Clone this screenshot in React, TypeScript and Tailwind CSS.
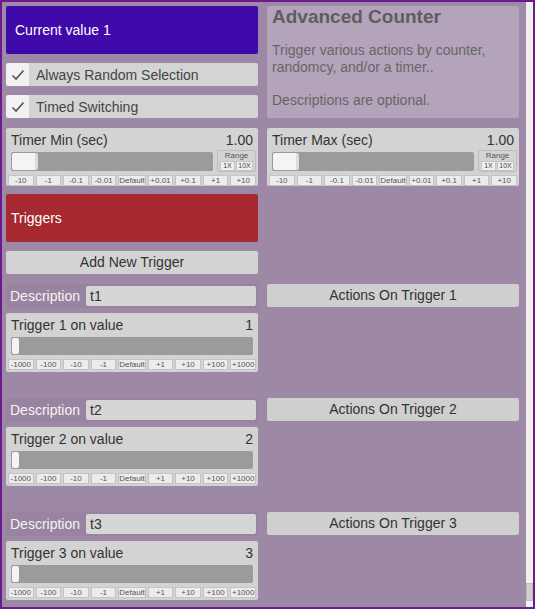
import React from 'react'

const timerSteps = ['-10', '-1', '-0.1', '-0.01', 'Default', '+0.01', '+0.1', '+1', '+10']
const triggerSteps = ['-1000', '-100', '-10', '-1', 'Default', '+1', '+10', '+100', '+1000']

function StepRow({ steps }: { steps: string[] }) {
  return (
    <div className="flex gap-[2px] px-[2px] h-[11px]">
      {steps.map((s) => (
        <div
          key={s}
          className="flex-1 flex items-center justify-center bg-[#ececec] border border-[#c4c4c4] text-[8px] leading-none text-[#555]"
        >
          {s}
        </div>
      ))}
    </div>
  )
}

function CheckRow({ label }: { label: string }) {
  return (
    <div className="flex h-[23px]">
      <div className="w-[23px] bg-[#f2f2f2] rounded-l-[2px] flex items-center justify-center">
        <svg width="14" height="12" viewBox="0 0 14 12" fill="none">
          <path d="M1.5 6.5 L5 10 L12.5 1.5" stroke="#555" strokeWidth="1.6" />
        </svg>
      </div>
      <div className="flex-1 bg-[#d4d4d4] rounded-r-[2px] flex items-center pl-[7px] pt-[1px] text-[14px] text-[#444]">
        {label}
      </div>
    </div>
  )
}

function TimerPanel({ title }: { title: string }) {
  return (
    <div className="h-[58px] bg-[#d3d3d3] rounded-[2px] flex flex-col">
      <div className="flex justify-between items-center px-[5px] h-[22px] pt-[2px] text-[14px] text-[#333]">
        <span>{title}</span>
        <span>1.00</span>
      </div>
      <div className="flex items-center gap-[4px] pl-[5px] pr-[2px] h-[24px]">
        <div className="flex-1 h-[19px] bg-[#9b9b9b] rounded-[2px] p-[1px]">
          <div className="w-[26px] h-full bg-[#f4f4f4] rounded-[2px] border-r-[3px] border-[#dcdcdc]" />
        </div>
        <div className="w-[39px] h-[22px] border border-[#bdbdbd] rounded-[2px] flex flex-col items-center">
          <span className="text-[8px] leading-[10px] text-[#555]">Range</span>
          <div className="flex gap-[1px]">
            <div className="w-[15px] h-[10px] bg-[#f0f0f0] border border-[#c4c4c4] text-[7px] leading-[8px] text-center text-[#444]">1X</div>
            <div className="w-[17px] h-[10px] bg-[#f0f0f0] border border-[#c4c4c4] text-[7px] leading-[8px] text-center text-[#444]">10X</div>
          </div>
        </div>
      </div>
      <div className="mt-[3px]">
        <StepRow steps={timerSteps} />
      </div>
    </div>
  )
}

function TriggerBlock({ n, last }: { n: number; last?: boolean }) {
  return (
    <div className={`flex gap-[9px] ${last ? '' : 'mb-[26px]'}`}>
      <div className="w-[252px] flex flex-col gap-[5px]">
        <div className="h-[24px] bg-[#9883a1] flex items-center pr-[2px]">
          <span className="w-[80px] pl-[4px] text-[14px] text-[#f4f4f4]">Description</span>
          <div className="flex-1 h-[20px] bg-[#d6d6d6] rounded-[2px] flex items-center pl-[4px] text-[14px] text-[#333]">
            t{n}
          </div>
        </div>
        <div className="h-[59px] bg-[#d3d3d3] rounded-[2px] flex flex-col">
          <div className="flex justify-between items-center px-[5px] h-[24px] text-[14px] text-[#333]">
            <span>Trigger {n} on value</span>
            <span>{n}</span>
          </div>
          <div className="px-[5px]">
            <div className="h-[18px] bg-[#9b9b9b] rounded-[2px] p-[1px]">
              <div className="w-[7px] h-full bg-[#f4f4f4] rounded-[2px]" />
            </div>
          </div>
          <div className="mt-[4px]">
            <StepRow steps={triggerSteps} />
          </div>
        </div>
      </div>
      <div className="w-[252px]">
        <div className="h-[23px] bg-[#cfcfcf] rounded-[2px] flex items-center justify-center text-[14px] text-[#333]">
          Actions On Trigger {n}
        </div>
      </div>
    </div>
  )
}

export default function App() {
  return (
    <div
      className="w-[535px] h-[609px] border-2 border-[#6c1b8e] bg-[#9d88a6] flex overflow-hidden"
      style={{ fontFamily: '"Liberation Sans", Arial, sans-serif' }}
    >
      <div className="flex-1 overflow-hidden pt-[4px] pl-[4px] pr-[7px]">
        {/* Header row */}
        <div className="flex gap-[9px] h-[112px]">
          <div className="w-[252px] flex flex-col gap-[9px]">
            <div className="h-[48px] bg-[#4009a9] rounded-[2px] flex items-center pl-[9px] text-[14px] text-white">
              Current value 1
            </div>
            <CheckRow label="Always Random Selection" />
            <CheckRow label="Timed Switching" />
          </div>
          <div className="w-[252px] bg-[#b3a3bb] rounded-[2px] px-[5px] pt-[1px] text-[#5e5e5e]">
            <div className="text-[19px] font-bold leading-[20px]">Advanced Counter</div>
            <div className="mt-[15px] text-[14px] leading-[16.5px] text-[#666]">
              Trigger various actions by counter,
              <br />
              randomcy, and/or a timer..
              <br />
              <br />
              Descriptions are optional.
            </div>
          </div>
        </div>

        {/* Timers */}
        <div className="flex gap-[9px] mt-[10px]">
          <div className="w-[252px]">
            <TimerPanel title="Timer Min (sec)" />
          </div>
          <div className="w-[252px]">
            <TimerPanel title="Timer Max (sec)" />
          </div>
        </div>

        {/* Triggers header */}
        <div className="w-[252px] mt-[8px] h-[48px] bg-[#a5292f] rounded-[2px] flex items-center pl-[5px] text-[14px] text-white">
          Triggers
        </div>
        <div className="w-[252px] mt-[9px] h-[23px] bg-[#d3d3d3] rounded-[2px] flex items-center justify-center text-[14px] text-[#333]">
          Add New Trigger
        </div>

        <div className="mt-[10px]">
          <TriggerBlock n={1} />
          <TriggerBlock n={2} />
          <TriggerBlock n={3} last />
        </div>
      </div>

      {/* Scrollbar */}
      <div className="w-[7px] bg-[#f0f0f0] flex flex-col justify-end pb-[6px]">
        <div className="h-[18px] bg-[#d0d0d0] border border-[#bdbdbd]" />
      </div>
    </div>
  )
}
